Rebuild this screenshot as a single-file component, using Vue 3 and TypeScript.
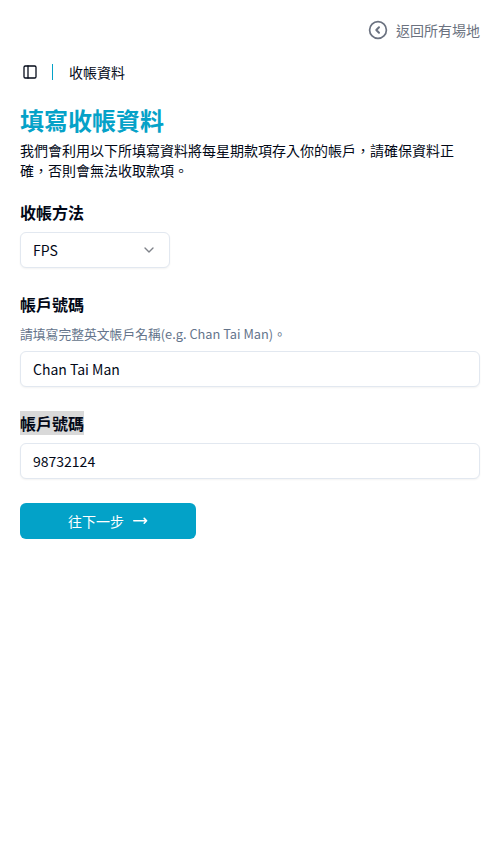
<script setup lang="ts">
import { ref } from 'vue'

const method = ref<string>('FPS')
const accountName = ref<string>('Chan Tai Man')
const accountNumber = ref<string>('98732124')
</script>

<template>
  <div class="page">
    <header class="top">
      <a class="back">
        <svg class="back-icon" viewBox="0 0 20 20" fill="none" stroke="currentColor" stroke-width="1.7" stroke-linecap="round" stroke-linejoin="round">
          <circle cx="10" cy="10" r="8.4" />
          <path stroke-width="2" d="M11 7.2 8.3 10l2.7 2.8" />
        </svg>
        <span>返回所有場地</span>
      </a>
    </header>
    <nav class="crumbs">
      <svg class="panel-icon" viewBox="0 0 24 24" fill="none" stroke="currentColor" stroke-width="1.9" stroke-linecap="round" stroke-linejoin="round">
        <rect x="3" y="3" width="18" height="18" rx="2" />
        <path d="M9 3v18" />
      </svg>
      <span class="divider"></span>
      <span>收帳資料</span>
    </nav>
    <h1>填寫收帳資料</h1>
    <p class="intro">我們會利用以下所填寫資料將每星期款項存入你的帳戶，請確保資料正確，否則會無法收取款項。</p>
    <form class="form" @submit.prevent>
      <div class="field method">
        <label>收帳方法</label>
        <button type="button" class="control select">
          <span>{{ method }}</span>
          <svg class="chevron" viewBox="0 0 24 24" fill="none" stroke="currentColor" stroke-width="2" stroke-linecap="round" stroke-linejoin="round">
            <path d="m6 9 6 6 6-6" />
          </svg>
        </button>
      </div>
      <div class="field name">
        <label>帳戶號碼</label>
        <p class="hint">請填寫完整英文帳戶名稱(e.g. Chan Tai Man)。</p>
        <input v-model="accountName" class="control" />
      </div>
      <div class="field number">
        <label><mark>帳戶號碼</mark></label>
        <input v-model="accountNumber" class="control" />
      </div>
      <button type="submit" class="next">
        <span>往下一步</span>
        <svg class="arrow" viewBox="0 0 16 16" fill="none" stroke="currentColor" stroke-width="1.6" stroke-linecap="round" stroke-linejoin="round">
          <path d="M1.8 7.8h12.8M12.2 5.4l2.4 2.4-2.4 2.4" />
        </svg>
      </button>
    </form>
  </div>
</template>

<style>
body {
  background: #fff;
}
</style>

<style scoped>
.page {
  box-sizing: border-box;
  padding: 20px;
  font-family: 'Noto Sans CJK TC', sans-serif;
  font-size: 14px;
  line-height: 20px;
  color: #020817;
}
.top {
  display: flex;
  justify-content: flex-end;
}
.back {
  display: flex;
  align-items: center;
  gap: 8px;
  color: #6b7280;
}
.back-icon {
  width: 20px;
  height: 20px;
}
.crumbs {
  display: flex;
  align-items: center;
  height: 28px;
  margin-top: 18px;
  padding-left: 2px;
}
.panel-icon {
  width: 16px;
  height: 16px;
}
.divider {
  width: 1px;
  height: 16px;
  margin: 0 16px 0 14px;
  background: #05a2c8;
}
h1 {
  margin: 18px 0 4px;
  font-size: 24px;
  line-height: 32px;
  font-weight: 700;
  color: #05a2c8;
}
.intro {
  margin: 0;
}
.field {
  display: flex;
  flex-direction: column;
  align-items: flex-start;
}
.method {
  margin-top: 20px;
}
.name,
.number {
  margin-top: 24px;
}
label {
  font-size: 16px;
  line-height: 24px;
  font-weight: 700;
}
mark {
  display: block;
  color: inherit;
  background: #d9d9d9;
}
.hint {
  margin: 8px 0 0;
  font-size: 12.8px;
  line-height: 19.2px;
  color: #64748b;
}
.control {
  box-sizing: border-box;
  width: 100%;
  height: 36px;
  margin: 8px 0 0;
  padding: 0 12px;
  border: 1px solid #e2e8f0;
  border-radius: 6px;
  background: #fff;
  box-shadow: 0 1px 2px rgba(0, 0, 0, 0.05);
  font: inherit;
  color: inherit;
  outline: none;
}
.select {
  display: flex;
  align-items: center;
  justify-content: space-between;
  width: 150px;
}
.chevron {
  width: 16px;
  height: 16px;
  opacity: 0.5;
}
.next {
  display: flex;
  align-items: center;
  justify-content: center;
  gap: 8px;
  width: 176px;
  height: 36px;
  margin-top: 24px;
  padding: 0;
  border: 0;
  border-radius: 6px;
  background: #03a2c8;
  color: #fff;
  font: inherit;
}
.arrow {
  width: 16px;
  height: 16px;
}
</style>
